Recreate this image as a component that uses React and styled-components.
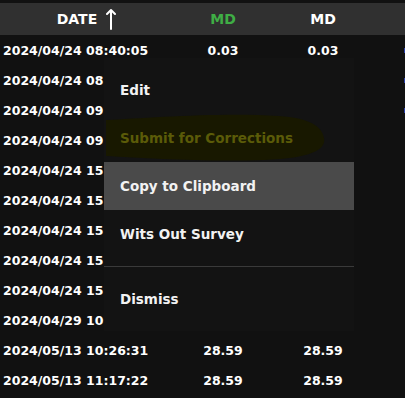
import React from "react";
import styled, { createGlobalStyle } from "styled-components";

const Global = createGlobalStyle`
  html, body { margin: 0; padding: 0; background: #111111; }
  body { font-family: "DejaVu Sans", "Noto Sans", sans-serif; color: #fff; overflow: hidden; }
`;

const Page = styled.div`
  position: relative;
  width: 405px;
  height: 398px;
  background: #111111;
  padding-top: 3px;
  box-sizing: border-box;
  overflow: hidden;
`;

const Grid = styled.div`
  display: grid;
  grid-template-columns: 173px 100px 100px 32px;
`;

const HeaderCell = styled.div`
  height: 32px;
  background: #303030;
  display: flex;
  align-items: center;
  justify-content: center;
  gap: 9px;
  font-weight: 700;
  font-size: 14px;
  color: ${(p) => p.color || "#ffffff"};
`;

const Cell = styled.div`
  height: 30px;
  display: flex;
  align-items: center;
  justify-content: ${(p) => (p.left ? "flex-start" : "center")};
  padding-left: ${(p) => (p.left ? "3px" : "0")};
  font-weight: 700;
  font-size: 12.5px;
  color: #fff;
  white-space: nowrap;
  overflow: hidden;
  position: relative;
`;

const Mark = styled.span`
  position: absolute;
  right: 0;
  width: 1px;
  height: 5px;
  background: #2a3fa8;
`;

const Menu = styled.div`
  position: absolute;
  left: 104px;
  top: 58px;
  width: 250px;
  background: #131313;
  padding: 8px 0;
`;

const Item = styled.div`
  position: relative;
  height: 48px;
  display: flex;
  align-items: center;
  padding-left: 16px;
  font-weight: 700;
  font-size: 13.5px;
  color: ${(p) => (p.disabled ? "#5b5b08" : "#f2f2f2")};
  background: ${(p) => (p.active ? "#4a4a4a" : "transparent")};
`;

const ItemText = styled.span`
  position: relative;
`;

const Blob = styled.svg`
  position: absolute;
  left: 0;
  top: 0;
  width: 230px;
  height: 48px;
`;

const Divider = styled.div`
  height: 1px;
  margin: 8px 0;
  background: #3a3a3a;
`;

const rows = [
  ["2024/04/24 08:40:05", "0.03", "0.03", true],
  ["2024/04/24 08:52:11", "", "", true],
  ["2024/04/24 09:10:44", "", "", true],
  ["2024/04/24 09:35:02", "", "", false],
  ["2024/04/24 15:01:18", "", "", false],
  ["2024/04/24 15:12:40", "", "", false],
  ["2024/04/24 15:20:07", "", "", false],
  ["2024/04/24 15:31:55", "", "", false],
  ["2024/04/24 15:44:29", "", "", false],
  ["2024/04/29 10:05:13", "", "", false],
  ["2024/05/13 10:26:31", "28.59", "28.59", false],
  ["2024/05/13 11:17:22", "28.59", "28.59", false],
];

function ArrowUp() {
  return (
    <svg width="10" height="22" viewBox="0 0 10 22">
      <path d="M5 21V2M1 6l4-4 4 4" stroke="#fff" strokeWidth="2" fill="none" strokeLinecap="round" strokeLinejoin="round" />
    </svg>
  );
}

export default function App() {
  return (
    <Page>
      <Global />
      <Grid>
        <HeaderCell>
          DATE <ArrowUp />
        </HeaderCell>
        <HeaderCell color="#3fae45">MD</HeaderCell>
        <HeaderCell>MD</HeaderCell>
        <HeaderCell />
        {rows.map(([d, a, b, m], i) => (
          <React.Fragment key={i}>
            <Cell left>{d}</Cell>
            <Cell>{a}</Cell>
            <Cell>{b}</Cell>
            <Cell>{m && <Mark />}</Cell>
          </React.Fragment>
        ))}
      </Grid>
      <Menu>
        <Item>Edit</Item>
        <Item disabled>
          <Blob viewBox="0 0 230 48">
            <path
              d="M2 6 C40 4 120 -2 175 2 C205 4 218 12 220 24 C222 34 212 44 160 46 C100 48 40 44 2 42 Z"
              fill="#181800"
            />
          </Blob>
          <ItemText>Submit for Corrections</ItemText>
        </Item>
        <Item active>Copy to Clipboard</Item>
        <Item>Wits Out Survey</Item>
        <Divider />
        <Item>Dismiss</Item>
      </Menu>
    </Page>
  );
}
